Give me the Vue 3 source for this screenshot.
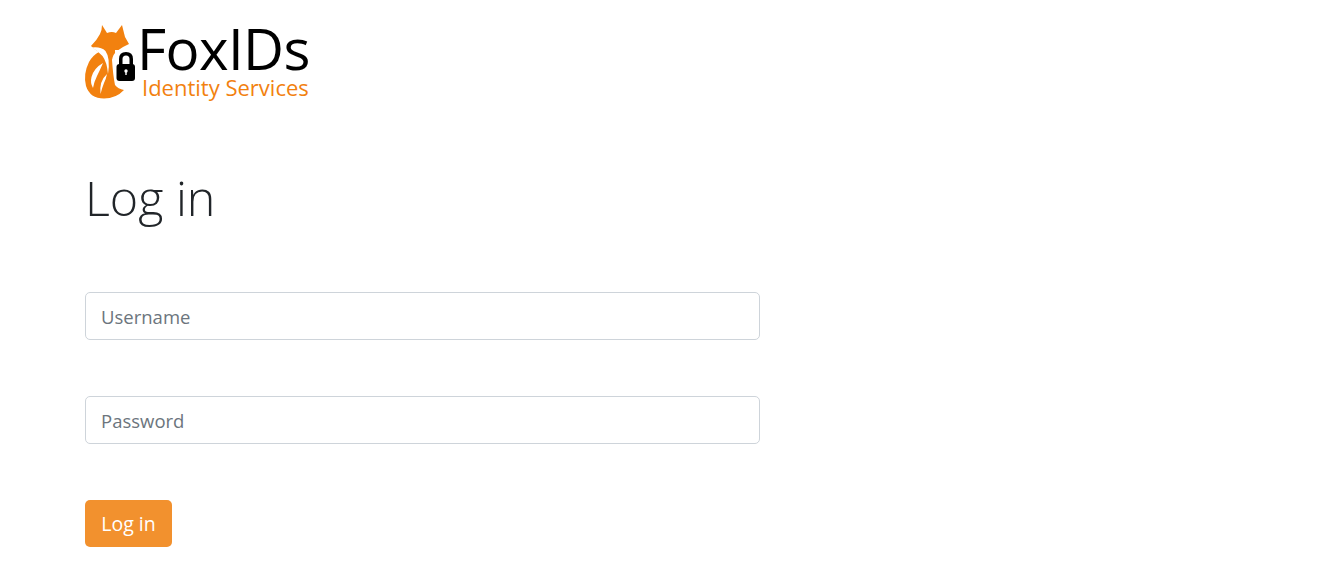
<script setup>
const fields = [
  { id: 'username', type: 'text', placeholder: 'Username' },
  { id: 'password', type: 'password', placeholder: 'Password' }
]
</script>

<template>
  <div class="page">
    <header class="brand">
      <svg class="fox" viewBox="80 20 60 85" width="60" height="85" aria-hidden="true">
        <path class="orange" d="M102 25 L107 33 Q112 31 116 33 L122 25 L125 37 L129 44 Q122 47 117 51 Q113 54 112 60 Q113 75 115 85 Q118 89 124 90 Q116 98.5 104 98.5 Q90 98.5 86 86 Q83 74 89 62 Q93 55 99 52 Q94 49 91 46 Q97 40 100 34 Q102 30 102 25 Z" />
        <path class="white" d="M92 47.5 Q101 46.5 105.5 51 Q110.5 58 108 74 Q107 62 102.5 56 Q98 51 92 47.5 Z" />
        <path class="white" d="M103 63 Q94 68 91.5 77 Q90 83 93 88 Q94 82 97 76 Q100 70 103 63 Z" />
        <path class="white" d="M107 74 Q99 81 100.5 94 Q102 88 104 83 Q106 79 107 74 Z" />
        <path class="white" d="M115 50 H137 V85 H116 Z" />
        <path class="black" d="M119 66 V59 Q119 52 126 52 Q133 52 133 59 V66 H129.5 V59 Q129.5 55.5 126 55.5 Q122.5 55.5 122.5 59 V66 Z" />
        <rect class="black" x="116.5" y="64" width="18.5" height="17" rx="3" />
        <circle class="white" cx="126" cy="71" r="1.7" />
        <rect class="white" x="125.3" y="71" width="1.4" height="4" />
      </svg>
      <div class="wordmark">
        <div class="name">FoxIDs</div>
        <div class="tagline">Identity Services</div>
      </div>
    </header>

    <h1 class="title">Log in</h1>

    <form class="form" @submit.prevent>
      <input
        v-for="field in fields"
        :key="field.id"
        class="input"
        :type="field.type"
        :placeholder="field.placeholder"
      />
      <button class="submit" type="submit">Log in</button>
    </form>
  </div>
</template>

<style>
html, body { margin: 0; background: #fff; }
</style>

<style scoped>
.page {
  box-sizing: border-box;
  width: 1329px;
  height: 566px;
  padding: 20px 0 0 85px;
  overflow: hidden;
  font-family: "Open Sans", "Noto Sans", sans-serif;
  color: #212529;
}
.brand {
  display: flex;
  align-items: flex-start;
  height: 85px;
  margin-left: -5px;
}
.fox { flex: none; }
.orange { fill: #f2810f; }
.white { fill: #fff; }
.black { fill: #000; }
.wordmark { margin-left: -1px; }
.name {
  font-size: 56.5px;
  line-height: 56px;
  color: #000;
  letter-spacing: -0.6px;
  margin: 1px 0 0 -2px;
}
.tagline {
  font-size: 22px;
  line-height: 20px;
  color: #f2810f;
  margin-left: 3px;
}
.title {
  margin: 62px 0 0;
  font-size: 48.4px;
  line-height: 60px;
  font-weight: 300;
}
.form {
  display: flex;
  flex-direction: column;
  align-items: flex-start;
  gap: 56px;
  margin-top: 65px;
}
.input {
  box-sizing: border-box;
  width: 675px;
  height: 48px;
  padding: 0 15px;
  border: 1px solid #ced4da;
  border-radius: 5px;
  font: 400 18.5px "Open Sans", "Noto Sans", sans-serif;
  color: #495057;
  outline: none;
}
.input::placeholder { color: #6c757d; opacity: 1; }
.submit {
  box-sizing: border-box;
  width: 87px;
  height: 47px;
  border: 0;
  border-radius: 5px;
  background: #f2912e;
  color: #fff;
  font: 400 19.5px "Open Sans", "Noto Sans", sans-serif;
  padding: 0;
}
</style>
